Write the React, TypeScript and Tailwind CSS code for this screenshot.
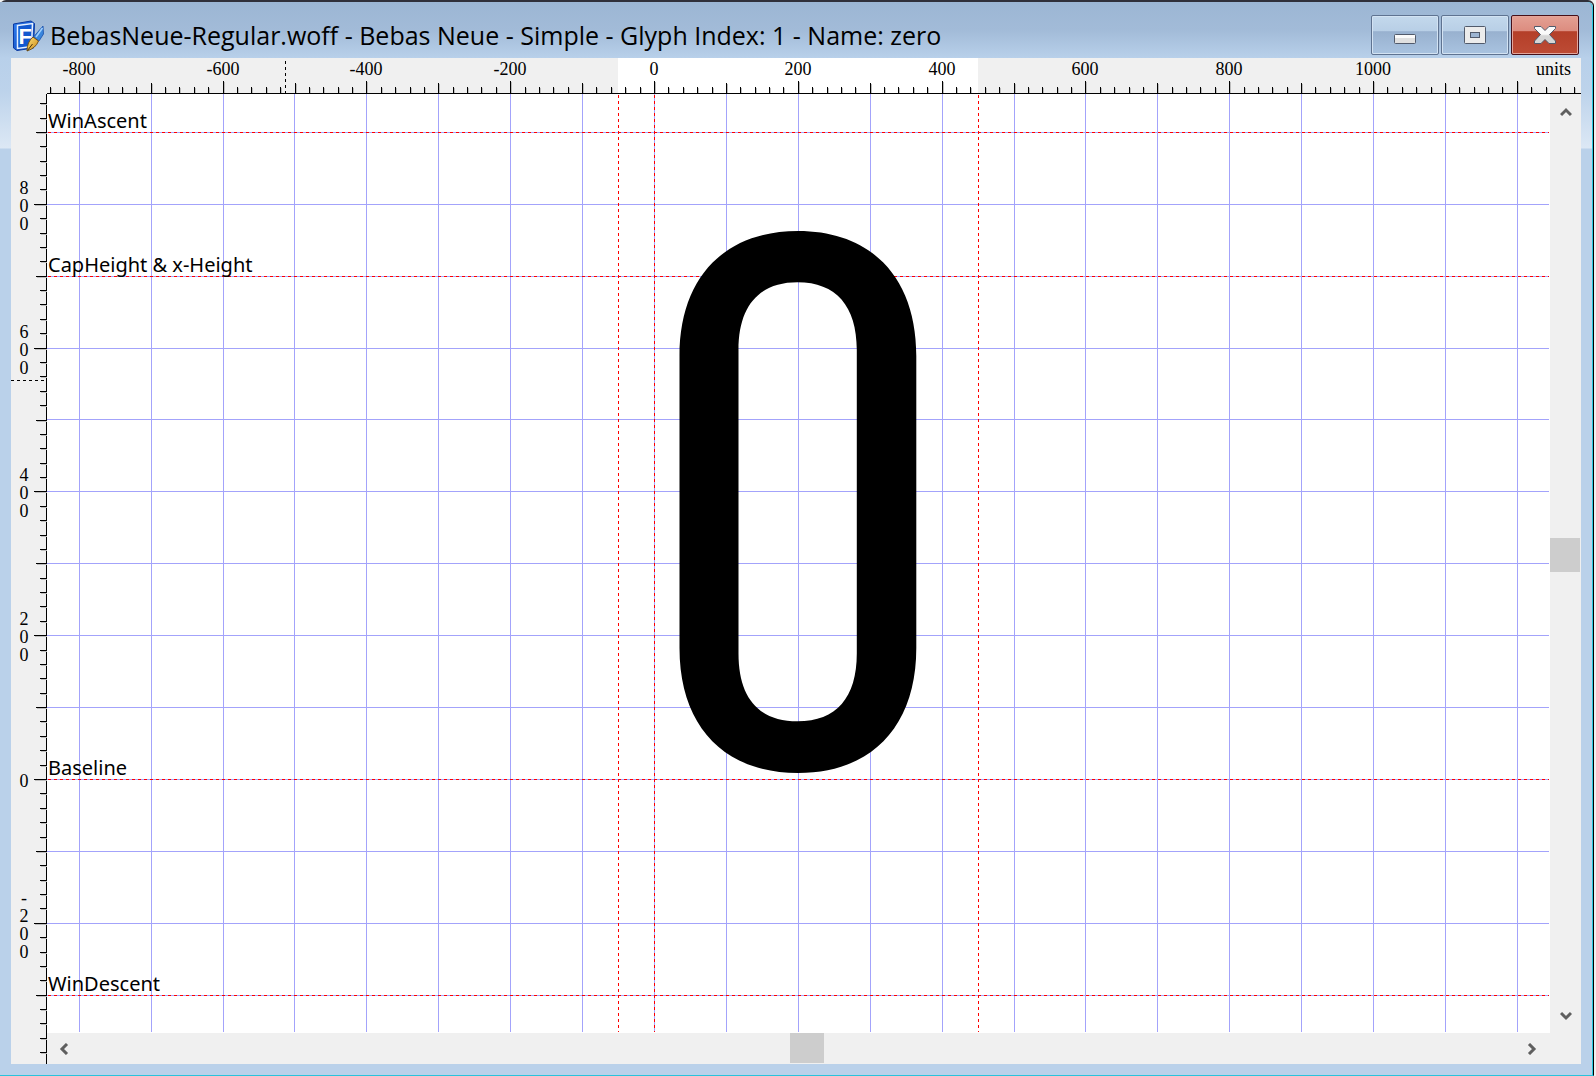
import React from "react";

const SCALE = 0.719;
const ORIGIN_X = 607;
const ORIGIN_Y = 685;
const RULER = 36;

const px = (u: number) => Math.round(ORIGIN_X + u * SCALE);
const py = (u: number) => Math.round(ORIGIN_Y - u * SCALE);

// Grid lines are rounded away from the origin, the same on both sides of it.
const gridOffset = (u: number) => Math.sign(u) * Math.round(Math.abs(u) * SCALE);
const gridX = (u: number) => ORIGIN_X + gridOffset(u);
const gridY = (u: number) => ORIGIN_Y - gridOffset(u);

const range = (from: number, to: number, step: number) => {
  const out: number[] = [];
  for (let v = from; v <= to; v += step) out.push(v);
  return out;
};

const TICKS_X = range(-840, 1280, 20);
const TICKS_Y = range(-380, 940, 20);
const tickLength = (u: number) => (u % 200 === 0 ? 12 : u % 100 === 0 ? 10 : 6);

const METRICS = [
  { name: "WinAscent", value: 900 },
  { name: "CapHeight & x-Height", value: 700 },
  { name: "Baseline", value: 0 },
  { name: "WinDescent", value: -300 },
];

function AppIcon() {
  return (
    <svg width="32" height="32" viewBox="0 0 32 32" aria-hidden="true">
      <defs>
        <linearGradient id="book" x1="0" y1="0" x2="1" y2="1">
          <stop offset="0" stopColor="#2f80f2" />
          <stop offset="1" stopColor="#0a3fb4" />
        </linearGradient>
        <linearGradient id="nib" x1="0" y1="0" x2="1" y2="1">
          <stop offset="0" stopColor="#ffe27a" />
          <stop offset="1" stopColor="#c98712" />
        </linearGradient>
      </defs>
      <path d="M1.500 4 L19 1 L22.500 3.500 L21.500 28 L5 30.500 L1.500 28 Z" fill="url(#book)" stroke="#0b3aa0" />
      <path d="M5.500 5.500 L20.500 3.500 L19.500 26.500 L5.500 28.500 Z" fill="#1259d0" stroke="#e6f1ff" strokeWidth="1.500" />
      <text x="6.500" y="24" fontFamily="Liberation Sans" fontWeight="700" fontSize="22" fill="#fff">F</text>
      <path d="M31 6 L31.500 14 L27 21 L21.500 17 Z" fill="#3a86dd" stroke="#1b4fa8" strokeWidth="0.800" />
      <path d="M30.500 8 L24 17" stroke="#9fd0ff" strokeWidth="1.500" />
      <path d="M21 17 L26.500 21 Q24 28 15 31 Q15 22 21 17 Z" fill="url(#nib)" stroke="#6d4a10" strokeWidth="0.900" />
      <path d="M15.500 30.500 L20.500 24" stroke="#4d340c" strokeWidth="1" />
    </svg>
  );
}

function TitleBar() {
  const plain =
    "flex h-10 w-17 items-center justify-center rounded-xs border border-[#5f7391] bg-[linear-gradient(#c3d8ec_0%,#b8cfe6_40%,#98b1cf_41%,#a9c3e0_100%)] shadow-[inset_0_0_0_1px_#d3e3f3]";
  return (
    <header className="flex h-14 shrink-0 items-center pl-3 pr-[13px] pt-3">
      <AppIcon />
      <h1 className="ml-1.5 min-w-0 flex-1 truncate pb-0.5 font-['Open_Sans',sans-serif] text-[25px] leading-8 text-black">
        BebasNeue-Regular.woff - Bebas Neue - Simple - Glyph Index: 1 - Name: zero
      </h1>
      <div className="flex gap-0.5 pb-0.5">
        <button type="button" aria-label="Minimize" className={plain}>
          <svg width="24" height="28" viewBox="0 0 24 28">
            <rect x="1.500" y="13.500" width="21" height="9" rx="1" fill="#e0e0e0" stroke="#515a6b" />
            <rect x="2" y="14" width="20" height="3" fill="#fafafa" />
          </svg>
        </button>
        <button type="button" aria-label="Maximize" className={plain}>
          <svg width="24" height="20" viewBox="0 0 24 20">
            <rect x="1.500" y="1.500" width="21" height="17" rx="1" fill="#ececec" stroke="#515a6b" />
            <rect x="7.500" y="7.500" width="9" height="5" fill="#9db5d2" stroke="#515a6b" />
          </svg>
        </button>
        <button
          type="button"
          aria-label="Close"
          className="flex h-10 w-17 items-center justify-center rounded-xs border border-[#470f18] bg-[linear-gradient(#e4a094_0%,#dc8c7f_40%,#b43f29_41%,#bd4b35_100%)] shadow-[inset_0_0_0_1px_#e3a59b]"
        >
          <svg width="24" height="20" viewBox="0 0 24 20">
            <defs>
              <linearGradient id="cross" x1="0" y1="0" x2="0" y2="1">
                <stop offset="0.450" stopColor="#fafafa" />
                <stop offset="0.550" stopColor="#d6d6d6" />
              </linearGradient>
            </defs>
            <path
              d="M1.500 1.500 H8 L12 5.500 L16 1.500 H22.500 V3.500 L16.500 9.500 L22.500 16 V18.500 H16 L12 14.500 L8 18.500 H1.500 V16 L7.500 9.500 L1.500 3.500 Z"
              fill="url(#cross)"
              stroke="#515a6b"
              strokeLinejoin="round"
            />
          </svg>
        </button>
      </div>
    </header>
  );
}

function HorizontalRuler() {
  return (
    <svg className="block h-9 w-full shrink-0" shapeRendering="crispEdges" role="img" aria-label="Horizontal ruler">
      <rect x={RULER + px(-50)} y="0" width={px(450) - px(-50)} height="35" fill="#fff" />
      <rect x={RULER} y="35" width="100%" height="1" fill="#000" />
      {TICKS_X.map((u) => {
        const x = RULER + px(u);
        const len = tickLength(u);
        return (
          <g key={u}>
            <rect x={x + 1} y={36 - len} width="1" height={len - 1} fill="#bdbdbd" />
            <rect x={x} y={35 - len} width="1" height={len} fill="#000" />
          </g>
        );
      })}
      <line x1="274.500" x2="274.500" y1="3" y2="36" stroke="#000" strokeDasharray="3 3" />
      {range(-800, 1000, 200).map((u) => (
        <text key={u} x={RULER + px(u)} y="17" textAnchor="middle" className="font-['Liberation_Serif',serif] text-[18px]">
          {u}
        </text>
      ))}
      <text x="100%" dx="-10" y="17" textAnchor="end" className="font-['Liberation_Serif',serif] text-[18px]">
        units
      </text>
    </svg>
  );
}

function VerticalRuler() {
  return (
    <svg className="block h-full w-9 shrink-0" shapeRendering="crispEdges" role="img" aria-label="Vertical ruler">
      <rect x="35" y="0" width="1" height="100%" fill="#000" />
      {TICKS_Y.map((u) => {
        const y = py(u);
        const len = tickLength(u);
        return (
          <g key={u}>
            <rect x={36 - len} y={y + 1} width={len} height="1" fill="#bdbdbd" />
            <rect x={35 - len} y={y} width={len + 1} height="1" fill="#000" />
          </g>
        );
      })}
      <line x1="0" x2="36" y1="286.500" y2="286.500" stroke="#000" strokeDasharray="3 3" />
      {range(-200, 800, 200).map((u) => {
        const chars = String(u).split("");
        return (
          <text key={u} textAnchor="middle" className="font-['Liberation_Serif',serif] text-[18px]">
            {chars.map((c, i) => (
              <tspan key={i} x="13" y={py(u) + 8 - 9 * (chars.length - 1) + 18 * i}>
                {c}
              </tspan>
            ))}
          </text>
        );
      })}
    </svg>
  );
}

function GlyphCanvas() {
  return (
    <div className="min-h-0 flex-1 bg-white pb-px pr-px">
      <svg className="block h-full w-full" shapeRendering="crispEdges" role="img" aria-label="Outline of the glyph zero">
        {range(-800, 1200, 100).map((u) => (
          <rect key={u} x={gridX(u)} y="0" width="1" height="100%" fill="#a3a3fb" />
        ))}
        {range(-300, 900, 100).map((u) => (
          <rect key={u} x="0" y={gridY(u)} width="100%" height="1" fill="#a3a3fb" />
        ))}
        {[-50, 0, 450].map((u) => (
          <line key={u} x1={px(u) + 0.5} x2={px(u) + 0.5} y1="1" y2="100%" stroke="#f00" strokeDasharray="3 3" />
        ))}
        {METRICS.map((m) => (
          <g key={m.name}>
            <line x1="1" x2="100%" y1={py(m.value) + 0.5} y2={py(m.value) + 0.5} stroke="#f00" strokeDasharray="3 3" />
            <text x="1" y={py(m.value) - 4} className="font-['Noto_Sans',sans-serif] text-[20px]">
              {m.name}
            </text>
          </g>
        ))}
        <path
          transform={`translate(${ORIGIN_X} ${ORIGIN_Y})`}
          shapeRendering="geometricPrecision"
          fillRule="evenodd"
          d="M25.500 -423 C25.500 -501 70 -548 144 -548 S262.300 -501 262.300 -423 V-131 C262.300 -53 218 -6 144 -6 S25.500 -53 25.500 -131 Z M84.500 -429 C84.500 -473 105 -496.700 143.500 -496.700 S202.800 -473 202.800 -429 V-125.500 C202.800 -81.500 182.500 -57.700 143.500 -57.700 S84.500 -81.500 84.500 -125.500 Z"
        />
      </svg>
    </div>
  );
}

function Arrow({ d, label }: { d: string; label: string }) {
  return (
    <button type="button" aria-label={label} className="flex size-9 shrink-0 items-center justify-center">
      <svg width="12" height="12" viewBox="0 0 12 12" fill="none" stroke="#5f5f5f" strokeWidth="3">
        <path d={d} />
      </svg>
    </button>
  );
}

export default function App() {
  return (
    <div className="flex h-screen flex-col overflow-hidden bg-[#f0f0f0] pr-0.5">
      <div className="flex min-h-0 flex-1 flex-col rounded-t-md border-b border-r border-t-2 border-b-[#28c3dc] border-r-black border-t-[#30303a] bg-[#bad1ea]">
        <div className="flex min-h-0 flex-1 flex-col rounded-tr-md border-r border-[#28c8e0] bg-[linear-gradient(#9cb6d4_0px,#a2bbd8_28px,#b8d0ea_56px,#bdd3eb_90px,#dce8f5_146px,#bad1ea_147px)]">
          <TitleBar />
          <main className="mb-[11px] ml-[11px] mr-[11px] flex min-h-0 flex-1 flex-col bg-[#f0f0f0]">
            <HorizontalRuler />
            <div className="flex min-h-0 flex-1">
              <VerticalRuler />
              <div className="flex min-w-0 flex-1 flex-col">
                <GlyphCanvas />
                <div className="flex h-[31px] shrink-0 items-center">
                  <Arrow label="Scroll left" d="M8 1 L3 6 L8 11" />
                  <div className="grow-[707]" />
                  <div className="mb-px h-[30px] w-[34px] bg-[#cdcdcd]" />
                  <div className="grow-[690]" />
                  <Arrow label="Scroll right" d="M3 1 L8 6 L3 11" />
                </div>
              </div>
              <div className="mb-[31px] flex w-[31px] shrink-0 flex-col items-center">
                <Arrow label="Scroll up" d="M1 9 L6 4 L11 9" />
                <div className="grow-[408]" />
                <div className="mr-px h-[34px] w-[30px] bg-[#cdcdcd]" />
                <div className="grow-[425]" />
                <Arrow label="Scroll down" d="M1 4 L6 9 L11 4" />
              </div>
            </div>
          </main>
        </div>
      </div>
    </div>
  );
}
